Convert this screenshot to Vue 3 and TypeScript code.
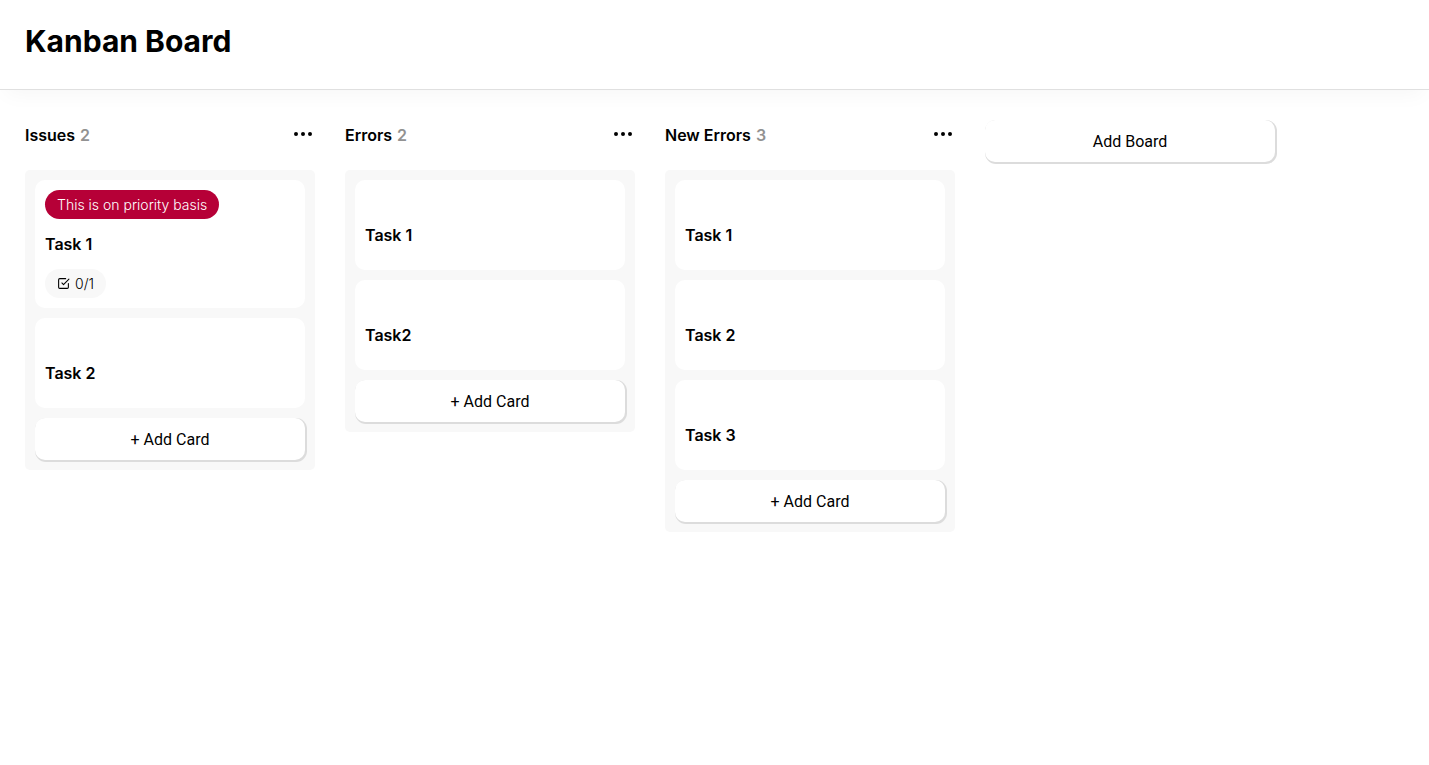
<script setup lang="ts">
interface Card {
  title: string
  label?: string
  progress?: string
}

interface Board {
  title: string
  cards: Card[]
}

const boards: Board[] = [
  {
    title: 'Issues',
    cards: [
      { title: 'Task 1', label: 'This is on priority basis', progress: '0/1' },
      { title: 'Task 2' },
    ],
  },
  { title: 'Errors', cards: [{ title: 'Task 1' }, { title: 'Task2' }] },
  {
    title: 'New Errors',
    cards: [{ title: 'Task 1' }, { title: 'Task 2' }, { title: 'Task 3' }],
  },
]
</script>

<template>
  <div class="app">
    <header class="app-header">
      <h1>Kanban Board</h1>
    </header>
    <main class="boards">
      <section v-for="board in boards" :key="board.title" class="board">
        <div class="board-top">
          <h2>{{ board.title }} <span>{{ board.cards.length }}</span></h2>
          <button class="more" type="button" aria-label="Board options">
            <svg width="24" height="24" viewBox="0 0 24 24" fill="#000" stroke="#000" stroke-width="2">
              <circle cx="5" cy="12" r="1" />
              <circle cx="12" cy="12" r="1" />
              <circle cx="19" cy="12" r="1" />
            </svg>
          </button>
        </div>
        <div class="board-cards">
          <article v-for="card in board.cards" :key="card.title" class="card">
            <div class="card-labels">
              <span v-if="card.label" class="chip priority">{{ card.label }}</span>
            </div>
            <h3>{{ card.title }}</h3>
            <div class="card-footer">
              <span v-if="card.progress" class="chip progress">
                <svg width="13" height="13" viewBox="0 0 24 24" fill="none" stroke="currentColor" stroke-width="2" stroke-linecap="round" stroke-linejoin="round">
                  <polyline points="9 11 12 14 22 4" />
                  <path d="M21 12v7a2 2 0 0 1-2 2H5a2 2 0 0 1-2-2V5a2 2 0 0 1 2-2h11" />
                </svg>
                {{ card.progress }}
              </span>
            </div>
          </article>
          <button class="add" type="button">+ Add Card</button>
        </div>
      </section>
      <div class="board">
        <button class="add" type="button">Add Board</button>
      </div>
    </main>
  </div>
</template>

<style>
body {
  margin: 0;
  background: #fff;
}
</style>

<style scoped>
.app {
  min-height: 100vh;
  color: #000;
  font-family: Inter, "Liberation Sans", sans-serif;
}

h1,
h2,
h3 {
  margin: 0;
}

.app-header {
  box-sizing: border-box;
  padding: 21px 25px 28px;
  border-bottom: 1px solid #e0e0e0;
  box-shadow: 0 10px 20px -6px rgba(0, 0, 0, 0.04);
}

h1 {
  font-size: 30px;
  line-height: 40px;
  font-weight: 700;
}

.boards {
  display: flex;
  align-items: flex-start;
  gap: 30px;
  padding: 30px 25px;
}

.board {
  flex: 0 0 290px;
  min-width: 0;
}

.board-top {
  display: flex;
  align-items: center;
  justify-content: space-between;
  height: 30px;
  margin-bottom: 20px;
}

h2,
h3 {
  font-size: 16px;
  line-height: 20px;
  font-weight: 600;
}

h2 {
  display: flex;
  gap: 5px;
}

h2 span {
  color: #929292;
}

.more {
  display: flex;
  padding: 0 0 2px;
  border: 0;
  background: none;
  cursor: pointer;
}

.board-cards {
  display: flex;
  flex-direction: column;
  gap: 10px;
  padding: 10px;
  border-radius: 5px;
  background: #f8f8f8;
}

.card {
  display: flex;
  flex-direction: column;
  gap: 15px;
  padding: 10px;
  border-radius: 10px;
  background: #fff;
}

.card-labels {
  display: flex;
  min-height: 20px;
}

.card-footer {
  display: flex;
}

.chip {
  display: flex;
  align-items: center;
  gap: 5px;
  padding: 6px 12px;
  border-radius: 15px;
  font-size: 14px;
  line-height: 17px;
  font-weight: 300;
}

.priority {
  background: #b60037;
  color: #fff;
}

.progress {
  background: #f8f8f8;
}

.add {
  width: 100%;
  padding: 12px 10px 10px;
  border: 0;
  border-radius: 10px;
  background: #fff;
  box-shadow: 1px 1px 0 1px #dcdcdc;
  color: #000;
  font-family: Roboto, "Liberation Sans", sans-serif;
  font-size: 16px;
  line-height: 20px;
  cursor: pointer;
}
</style>
